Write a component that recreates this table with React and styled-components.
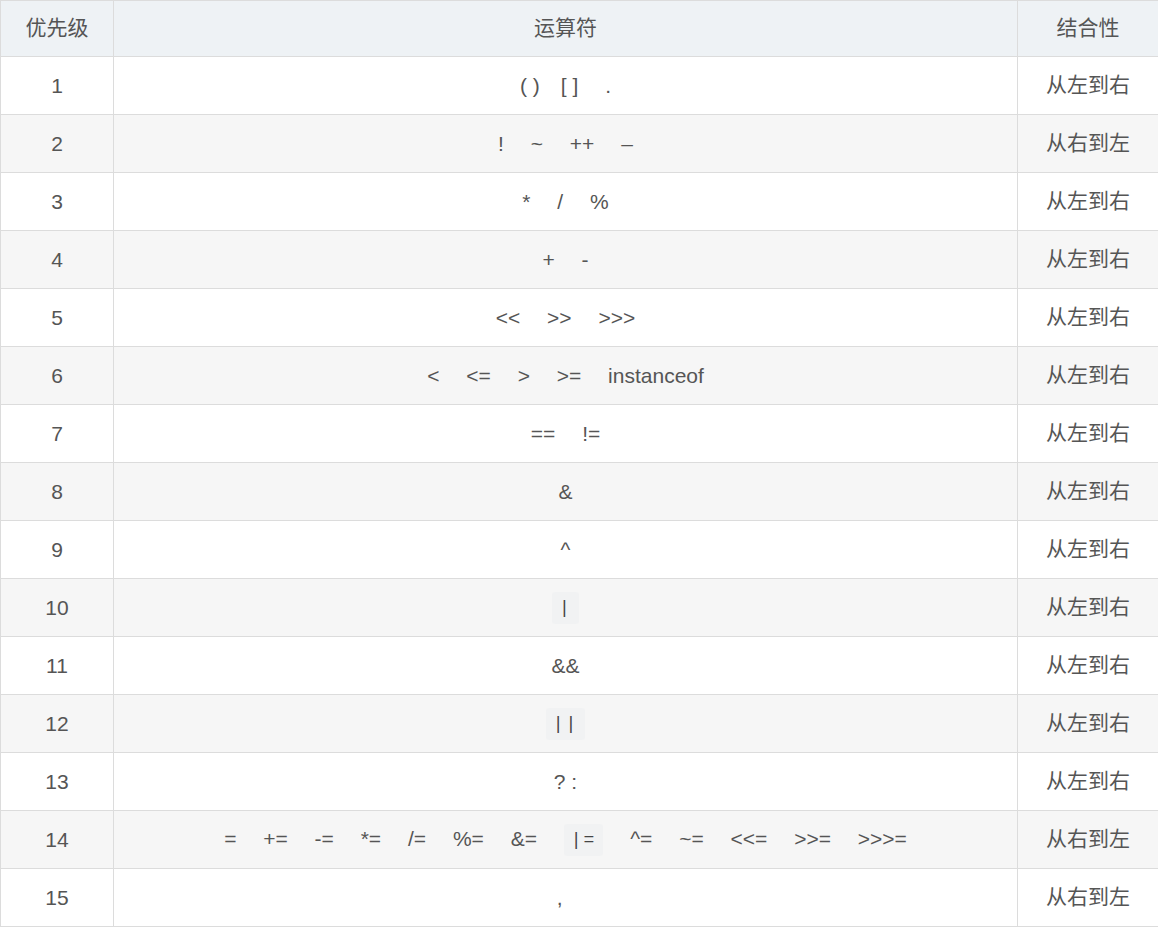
import React from 'react';
import styled, { createGlobalStyle } from 'styled-components';

const GlobalStyle = createGlobalStyle`
  html, body {
    margin: 0;
    padding: 0;
    background: #fff;
  }
  body {
    font-family: "Liberation Sans", "Noto Sans CJK SC", sans-serif;
    color: #555;
  }
`;

const Table = styled.table`
  width: 1158px;
  border-collapse: collapse;
  table-layout: fixed;
  font-size: 21px;
  color: #555;
`;

const HeadRow = styled.tr`
  height: 56px;
  background: #eef2f5;
`;

const HeadCell = styled.th`
  padding: 0 0 6px;
  border: 1px solid #dcdcdc;
  font-weight: normal;
  text-align: center;
  vertical-align: middle;
`;

const Row = styled.tr`
  height: 58px;
  background: ${(p) => (p.$striped ? '#f6f6f6' : '#fff')};
`;

const Cell = styled.td`
  padding: 0 0 ${(p) => (p.$cjk ? '6px' : '0')};
  border: 1px solid #dcdcdc;
  text-align: center;
  vertical-align: middle;
  white-space: pre;
`;

const Code = styled.code`
  display: inline-block;
  padding: 5px 7px;
  line-height: 22px;
  font-family: "Liberation Mono", monospace;
  font-size: 18px;
  letter-spacing: 2px;
  background: #f1f2f3;
  border-radius: 3px;
  vertical-align: middle;
  color: #444;
`;

const S = '\u2003 ';

const rows = [
  { level: 1, ops: '( )\u2003[ ]\u2003 .', dir: '从左到右' },
  { level: 2, ops: `!${S}~${S}++${S}–`, dir: '从右到左' },
  { level: 3, ops: `*${S}/${S}%`, dir: '从左到右' },
  { level: 4, ops: `+${S}-`, dir: '从左到右' },
  { level: 5, ops: `<<${S}>>${S}>>>`, dir: '从左到右' },
  { level: 6, ops: `<${S}<=${S}>${S}>=${S}instanceof`, dir: '从左到右' },
  { level: 7, ops: `==${S}!=`, dir: '从左到右' },
  { level: 8, ops: '&', dir: '从左到右' },
  { level: 9, ops: '^', dir: '从左到右' },
  { level: 10, ops: <Code>|</Code>, dir: '从左到右' },
  { level: 11, ops: '&&', dir: '从左到右' },
  { level: 12, ops: <Code>||</Code>, dir: '从左到右' },
  { level: 13, ops: '? :', dir: '从左到右' },
  {
    level: 14,
    ops: (
      <>
        {`=${S}+=${S}-=${S}*=${S}/=${S}%=${S}&=${S}`}
        <Code>|=</Code>
        {`${S}^=${S}~=${S}<<=${S}>>=${S}>>>=`}
      </>
    ),
    dir: '从右到左',
  },
  { level: 15, ops: ',\u00a0\u00a0', dir: '从右到左' },
];

export default function App() {
  return (
    <>
      <GlobalStyle />
      <Table>
        <colgroup>
          <col style={{ width: 113 }} />
          <col style={{ width: 904 }} />
          <col style={{ width: 141 }} />
        </colgroup>
        <thead>
          <HeadRow>
            <HeadCell>优先级</HeadCell>
            <HeadCell>运算符</HeadCell>
            <HeadCell>结合性</HeadCell>
          </HeadRow>
        </thead>
        <tbody>
          {rows.map((r, i) => (
            <Row key={r.level} $striped={i % 2 === 1}>
              <Cell>{r.level}</Cell>
              <Cell>{r.ops}</Cell>
              <Cell $cjk>{r.dir}</Cell>
            </Row>
          ))}
        </tbody>
      </Table>
    </>
  );
}
